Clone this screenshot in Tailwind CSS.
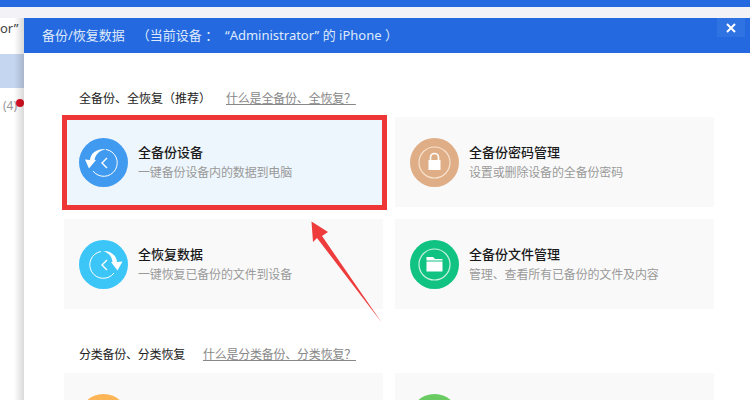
<!DOCTYPE html>
<html lang="zh-CN">
<head>
<meta charset="utf-8" />
<title>备份/恢复数据</title>
<script src="https://cdn.jsdelivr.net/npm/@tailwindcss/browser@4"></script>
</head>
<body class="relative w-[750px] h-[400px] overflow-hidden bg-white font-['Noto_Sans','Noto_Sans_CJK_SC',sans-serif]">
  <!-- app behind the dialog -->
  <div class="h-[7px] bg-[#2469e0]"></div>
  <div class="h-[11px] bg-[#f3f2f6]"></div>
  <div class="flex h-[382px]">
    <div class="w-[82px] border-r border-[#e6e6ea] text-[13px]">
      <div class="h-[36px] bg-white pt-[1px] leading-[18px] text-[#444]">or”</div>
      <div class="h-[34px] bg-[#c5d6f0]"></div>
      <div class="relative pl-[3px] pt-[9px] leading-[18px] text-[12px] text-[#999]">
        (4)
        <span class="absolute left-[16px] top-[11px] h-[8px] w-[8px] rounded-full bg-[#dd1122]"></span>
      </div>
    </div>
  </div>

  <!-- dialog -->
  <div class="absolute left-[24px] top-[18px] w-[726px] h-[382px] overflow-hidden bg-white">
    <div class="flex h-[35px] items-center justify-between bg-[#2469e0] pl-[18px] text-[13px] text-[#dfeafb]">
      <div class="flex">
        <span>备份/恢复数据</span>
        <span class="ml-[12px] whitespace-pre">（当前设备 ：  “Administrator” 的 iPhone ）</span>
      </div>
      <div class="mr-[5px] flex h-[19px] w-[28px] self-start items-center justify-center bg-[#2f72e2]">
        <svg width="10" height="10" viewBox="0 0 10 10"><path d="M1 1 L9 9 M9 1 L1 9" stroke="#fff" stroke-width="2"/></svg>
      </div>
    </div>

    <div class="pl-[40px] pt-[37px]">
      <div class="flex h-[18px] items-center pl-[15px] text-[12px] leading-[18px]">
        <span class="text-[#222]">全备份、全恢复（推荐）</span>
        <span class="ml-[15px] tracking-[-0.2px] text-[#888] underline">什么是全备份、全恢复？</span>
      </div>

      <div class="mt-[9px] grid w-[650px] grid-cols-[319px_319px] gap-[12px]">
        <div class="relative flex h-[90px] items-center gap-[10px] bg-[#eef6fd] pl-[15px]">
          <svg width="49" height="49" viewBox="0 0 49 49" class="shrink-0">
            <circle cx="24.5" cy="24.5" r="24.5" fill="#3f9af0"/>
            <path d="M27 11.5 A13.5 13.5 0 1 1 14 33" fill="none" stroke="#fff" stroke-width="1"/>
            <path d="M11 22 C11.500 15 18 10.500 27 11 C21 12.500 16.500 16 15.500 22 L17 22 L10 30.500 L6 21.500 Z" fill="#fff"/>
            <path d="M28 20 L23 25 L28 30" fill="none" stroke="#fff" stroke-width="1.400"/>
          </svg>
          <div>
            <div class="text-[13px] font-medium leading-[20px] text-[#1a1a1a]">全备份设备</div>
            <div class="mt-[1px] text-[12px] leading-[20px] tracking-[-0.15px] text-[#999]">一键备份设备内的数据到电脑</div>
          </div>
          <div class="absolute -left-[2px] -right-[4px] -top-[2px] -bottom-[3px] border-[5px] border-[#ef3636]"></div>
        </div>

        <div class="flex h-[90px] items-center gap-[10px] bg-[#f9f9fa] pl-[15px]">
          <svg width="49" height="49" viewBox="0 0 49 49" class="shrink-0">
            <circle cx="24.5" cy="24.5" r="24.5" fill="#dfae86"/>
            <circle cx="24.5" cy="24.5" r="15.500" fill="none" stroke="#f7e3d0" stroke-width="1.200"/>
            <path d="M20.500 23 V19.500 A4 4 0 0 1 28.500 19.500 V23" fill="none" stroke="#fff" stroke-width="1.600"/>
            <rect x="18.500" y="22" width="12" height="10" fill="#fff"/>
          </svg>
          <div>
            <div class="text-[13px] font-medium leading-[20px] text-[#1a1a1a]">全备份密码管理</div>
            <div class="mt-[1px] text-[12px] leading-[20px] tracking-[-0.15px] text-[#999]">设置或删除设备的全备份密码</div>
          </div>
        </div>

        <div class="flex h-[90px] items-center gap-[10px] bg-[#f9f9fa] pl-[15px]">
          <svg width="49" height="49" viewBox="0 0 49 49" class="shrink-0">
            <circle cx="24.5" cy="24.5" r="24.5" fill="#3cc5f7"/>
            <path d="M22 11.500 A13.500 13.500 0 1 0 35 33" fill="none" stroke="#fff" stroke-width="1"/>
            <path d="M38 22 C37.500 15 31 10.500 24 11 C29 12.500 33 16 33.500 22 L32 22 L38.500 30.500 L43.500 21.500 Z" fill="#fff"/>
            <path d="M28 20 L23 25 L28 30" fill="none" stroke="#fff" stroke-width="1.400"/>
          </svg>
          <div>
            <div class="text-[13px] font-medium leading-[20px] text-[#1a1a1a]">全恢复数据</div>
            <div class="mt-[1px] text-[12px] leading-[20px] tracking-[-0.15px] text-[#999]">一键恢复已备份的文件到设备</div>
          </div>
        </div>

        <div class="flex h-[90px] items-center gap-[10px] bg-[#f9f9fa] pl-[15px]">
          <svg width="49" height="49" viewBox="0 0 49 49" class="shrink-0">
            <circle cx="24.5" cy="24.5" r="24.5" fill="#10c383"/>
            <circle cx="24.5" cy="24.5" r="15.500" fill="none" stroke="#c9f2e1" stroke-width="1.200"/>
            <path d="M16.500 17 H23 L25 19 H32.500 V20.500 H16.500 Z" fill="#fff"/>
            <rect x="16.500" y="21.500" width="16" height="10" fill="#fff"/>
          </svg>
          <div>
            <div class="text-[13px] font-medium leading-[20px] text-[#1a1a1a]">全备份文件管理</div>
            <div class="mt-[1px] text-[12px] leading-[20px] tracking-[-0.15px] text-[#999]">管理、查看所有已备份的文件及内容</div>
          </div>
        </div>
      </div>

      <div class="mt-[37px] flex h-[18px] items-center pl-[15px] text-[12px] leading-[18px] tracking-[-0.23px]">
        <span class="text-[#222]">分类备份、分类恢复</span>
        <span class="ml-[18px] text-[#888] underline">什么是分类备份、分类恢复？</span>
      </div>

      <div class="mt-[9px] grid w-[650px] grid-cols-[319px_319px] gap-[12px]">
        <div class="h-[90px] bg-[#f9f9fa] pl-[15px] pt-[21px]">
          <div class="h-[49px] w-[49px] rounded-full bg-[#fdb558]"></div>
        </div>
        <div class="h-[90px] bg-[#f9f9fa] pl-[15px] pt-[21px]">
          <div class="h-[49px] w-[49px] rounded-full bg-[#6bcb63]"></div>
        </div>
      </div>
    </div>
  </div>
  <!-- soft shadow on the dialog's left edge -->
  <div class="absolute left-[14px] top-[18px] h-[382px] w-[10px] bg-gradient-to-r from-transparent to-black/15"></div>

  <!-- annotation arrow -->
  <svg class="absolute left-[300px] top-[215px]" width="90" height="115" viewBox="300 215 90 115">
    <path d="M311.500 221.500 L328 232 L322 236 L382 323 L317 238 L313 242 Z" fill="#ee3b3b"/>
  </svg>
</body>
</html>
